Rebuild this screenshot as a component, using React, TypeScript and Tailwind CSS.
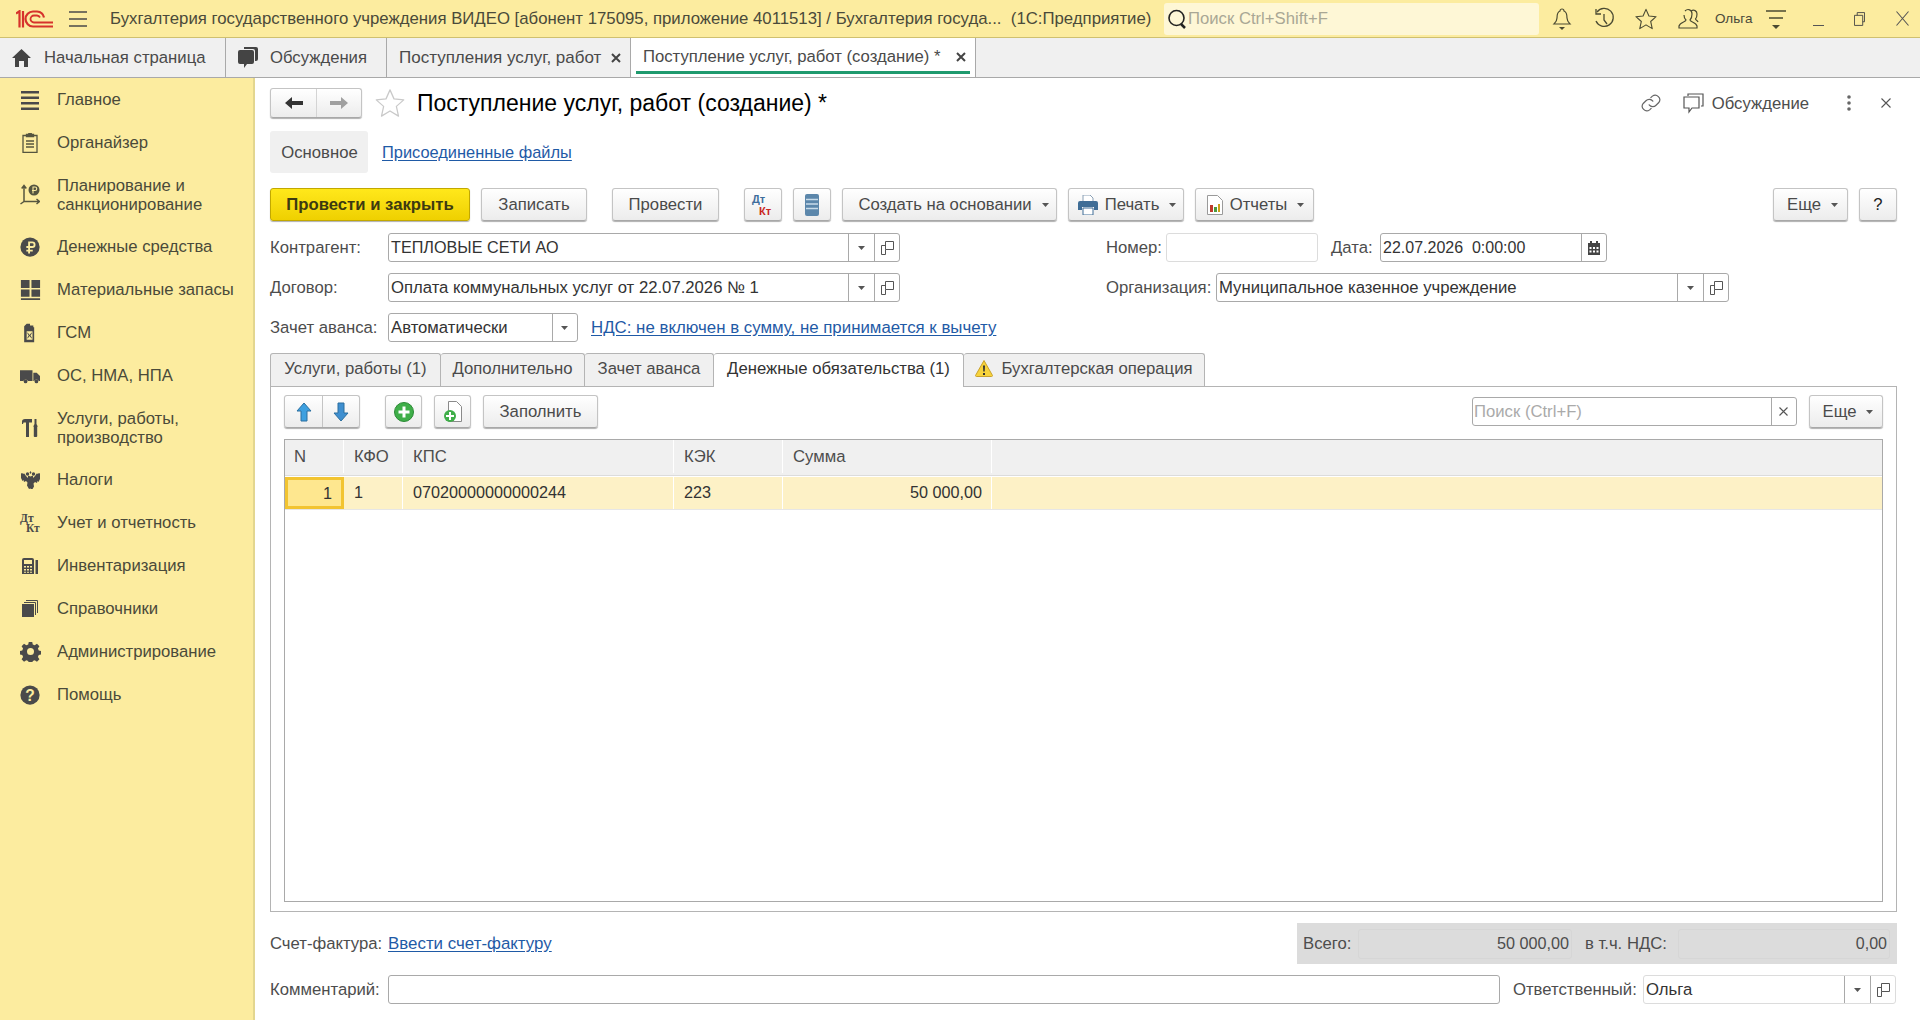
import React from "react";

const Caret = ({ c = "#555" }: { c?: string }) => (
  <svg width="7" height="4" viewBox="0 0 7 4" className="shrink-0 ml-[3px]"><path d="M0 0h7L3.5 4z" fill={c} /></svg>
);
const OpenIcon = () => (
  <svg width="14" height="14" viewBox="0 0 14 14" fill="none" stroke="#555"><path d="M5.5 .5h8v8h-8zM5.5 4.5h-4v9h4v-5" /></svg>
);
const Star = ({ s = 18, c = "#333", w = 1.2 }: { s?: number; c?: string; w?: number }) => (
  <svg width={s} height={s} viewBox="0 0 24 24" fill="none" stroke={c} strokeWidth={w} strokeLinejoin="round"><path d="M12 1.5l3.2 7.2 7.8.8-5.9 5.2 1.7 7.8L12 18.4l-6.8 4.1 1.7-7.8L1 9.5l7.8-.8z" /></svg>
);
const Close = () => (
  <svg width="10" height="10" viewBox="0 0 10 10" stroke="#444" strokeWidth="2" className="shrink-0"><path d="M1 1l8 8M9 1l-8 8" /></svg>
);

const Btn = ({ w, children, className = "" }: { w: string; children?: React.ReactNode; className?: string }) => (
  <div className={`${w} h-[33px] shrink-0 flex items-center justify-center gap-[7px] rounded-[3px] border border-[#c4c4c4] border-b-[#a8a8a8] bg-gradient-to-b from-white to-[#ececec] shadow-[0_1px_1px_#b0b0b0] text-[#4a4a4a] whitespace-nowrap ${className}`}>{children}</div>
);

const Input = ({ w, text, parts = [], className = "", textClass = "" }: { w: string; text?: string; parts?: ("down" | "open" | "cal" | "x")[]; className?: string; textClass?: string }) => (
  <div className={`${w} h-[29px] shrink-0 flex rounded-[3px] border border-[#a9a9a9] bg-white ${className}`}>
    <div className={`flex-1 min-w-0 px-[2px] leading-[27px] text-[#333] whitespace-pre overflow-hidden ${textClass}`}>{text}</div>
    {parts.map((p, i) => (
      <div key={i} className="w-[25.5px] flex items-center justify-center border-l border-[#a9a9a9]">
        {p === "down" && <svg width="7" height="4" viewBox="0 0 7 4"><path d="M0 0h7L3.5 4z" fill="#555" /></svg>}
        {p === "open" && <OpenIcon />}
        {p === "cal" && (
          <svg width="12" height="14" viewBox="0 0 12 14"><path d="M0 2h2V0h2v2h4V0h2v2h2v12H0z" fill="#444" /><path d="M1.5 6h2v2h-2zM5 6h2v2H5zM8.500 6h2v2h-2zM1.500 9.500h2v2h-2zM5 9.500h2v2H5zM8.500 9.500h2v2h-2z" fill="#fff" /></svg>
        )}
      </div>
    ))}
  </div>
);

const Label = ({ w, children }: { w: string; children: React.ReactNode }) => (
  <div className={`${w} shrink-0 text-[#4d4d4d] whitespace-nowrap`}>{children}</div>
);

const G = ({ children, s = 22 }: { children: React.ReactNode; s?: number }) => (
  <svg width={s} height={s} viewBox="0 0 24 24" fill="#4a4a4a">{children}</svg>
);

const navItems: { t: string[]; i: React.ReactNode }[] = [
  { t: ["Главное"], i: <G s={24}><path d="M3 3h18v2.500H3zM3 8.500h18V11H3zM3 14h18v2.500H3zM3 19.500h18V22H3z" /></G> },
  { t: ["Органайзер"], i: <svg width="16" height="20" viewBox="0 0 16 20" fill="none" stroke="#55553f" strokeWidth="1.300"><path d="M5 2.500H1v16.800h14V2.500h-4" /><path d="M4.500 3.500V1.500h2a1.500 1.500 0 013 0h2v2z" fill="#55553f" /><path d="M4 8h8M4 11h8M4 14h8" /></svg> },
  { t: ["Планирование и", "санкционирование"], i: <svg width="20" height="21" viewBox="0 0 20 21" fill="none" stroke="#55553f" strokeWidth="1.500"><path d="M4 2v15.500h15M1.700 4.500L4 1.500l2.300 3M16.500 15l3 2.500-3 2.500M4 17.500L.5 20" /><circle cx="14" cy="6" r="5.500" fill="#55553f" stroke="none" /><path d="M13 9.500V3h2a1.700 1.700 0 010 3.500h-3" stroke="#fcec9f" strokeWidth="1.100" /></svg> },
  { t: ["Денежные средства"], i: <G><circle cx="12" cy="12" r="10.500" /><path d="M10 6h4.500a3.500 3.500 0 010 7H12v2h3v2h-3v2h-2v-2H8v-2h2v-2H8v-2h2zm2 2v3h2.500a1.500 1.500 0 000-3z" fill="#fcec9f" /></G> },
  { t: ["Материальные запасы"], i: <G s={23}><path d="M2 2h9v8.500H2zM13 2h9v8.500h-9zM2 12h9v7.500H2zM13 12h9v7.500h-9zM2 21h20v2H2z" /></G> },
  { t: ["ГСМ"], i: <G s={20}><path fillRule="evenodd" d="M5 4l3-3h4v2h4v2h1v18H5zm3 6v10h7V10z" /><path d="M9 11l2.500 3.500L14 11v2l-1.500 2 1.500 2v2l-2.500-3.500L9 19v-2l1.500-2L9 13z" /></G> },
  { t: ["ОС, НМА, НПА"], i: <G s={20}><path d="M0 5h15v13H9.500a3 3 0 00-5.500 0H0zM16 8h4l4 4v6h-1.500a3 3 0 00-5.500 0h-1z" /><circle cx="6.700" cy="18.500" r="2.200" /><circle cx="19.700" cy="18.500" r="2.200" /></G> },
  { t: ["Услуги, работы,", "производство"], i: <svg width="17" height="18" viewBox="0 0 17 18" fill="#4a4a4a"><path d="M0 2.500C0 1 1 0 3 0h7v3.500H7V18H4V3.500H1.500L1 5H0zM12.500 0h2v5l1 2v1l-.3 0v8.500a1.200 1.200 0 01-1.200 1.500h-1a1.200 1.200 0 01-1.200-1.500V8h-.3V7l1-2z" /></svg> },
  { t: ["Налоги"], i: <svg width="19" height="18" viewBox="0 0 19 18" fill="#4a4a4a"><circle cx="6.500" cy="3" r="1.700" /><circle cx="12.500" cy="3" r="1.700" /><path d="M9.500 0l1 1.500-1 1.500-1-1.500zM0 2l1.200.8L1.500 2l1 1L3 2.200l1 1.300L5 5l2 2V4.500l2.500 1 2.500-1V7l2-2 1-1.500 1-1.300.5.8 1-1 .3.800L19 2v6l-1.500 3-1-1-.5 2-2-1-1.500 1.500.5 3-2 3.500-1.500-1.500L8 18l-2-3.500.5-3L5 10l-2 1-.5-2-1 1L0 7z" /></svg> },
  { t: ["Учет и отчетность"], i: <svg width="24" height="24" viewBox="0 0 24 24" fill="#4a4a4a"><text x="2" y="10.500" fontSize="11.500" fontWeight="700" fontFamily="Liberation Serif">Дт</text><text x="8" y="21" fontSize="11.500" fontWeight="700" fontFamily="Liberation Serif">Кт</text></svg> },
  { t: ["Инвентаризация"], i: <svg width="16" height="17" viewBox="0 0 16 17" fill="#4a4a4a"><path fillRule="evenodd" d="M0 3a2 2 0 012-2h8a2 2 0 012 2v14H0zm2 0v4h8V3zm0 6v1.500h2V9zm3 0v1.500h2V9zm3 0v1.500h2V9zm-6 3v1.500h2V12zm3 0v1.500h2V12zm3 0v1.500h2V12zm-6 2.800v1h2v-1zm3 0v1h2v-1zm3 0v1h2v-1z" /><path d="M13.500 3H16v14h-2.500z" /></svg> },
  { t: ["Справочники"], i: <svg width="16" height="17" viewBox="0 0 16 17" fill="#4a4a4a"><path d="M0 4h12v13H0z" /><path d="M2 2.500h11.500V15" fill="none" stroke="#4a4a4a" /><path d="M4 .5h11.500V13" fill="none" stroke="#4a4a4a" /></svg> },
  { t: ["Администрирование"], i: <G s={21}><path fillRule="evenodd" d="M10 1h4l.6 3 2.200.9 2.600-1.700 2.800 2.800-1.700 2.600.9 2.200 3 .6v4l-3 .6-.9 2.200 1.700 2.600-2.800 2.800-2.600-1.700-2.200.9-.6 3h-4l-.6-3-2.200-.9-2.600 1.700-2.800-2.800 1.700-2.600-.9-2.200-3-.6v-4l3-.6.9-2.200L1.800 6l2.800-2.800 2.600 1.700L9.400 4zM12 8a4 4 0 100 8 4 4 0 000-8z" /></G> },
  { t: ["Помощь"], i: <G><circle cx="12" cy="12" r="10.500" /><text x="12" y="18" fontSize="17" fontWeight="700" fill="#fcec9f" textAnchor="middle" fontFamily="Liberation Sans">?</text></G> },
];

const Logo = () => (
  <svg width="37" height="18" viewBox="0 0 37 18" fill="none" stroke="#d6322c" strokeWidth="2.200" className="shrink-0">
    <path d="M0 3.500L3.500 1.200V17.500" />
    <path d="M7 1v16.500" />
    <path d="M37 16.500H17a7.500 7.500 0 010-15h4a7.500 7.500 0 017 6" />
    <path d="M37 12.500H18a3.500 3.500 0 010-7h3a3.500 3.500 0 013 2" strokeWidth="1.800" />
  </svg>
);

const tbI = "#4a4a32";

export default function App() {
  return (
    <div className="w-[1920px] h-[1020px] overflow-hidden flex flex-col bg-white font-['Liberation_Sans',Arial,sans-serif] text-[16.700px] leading-[19px] text-[#333]">
      {/* Title bar */}
      <header className="h-[38px] shrink-0 flex items-center bg-[#fcec9f] border-b border-[#cfc070]">
        <div className="w-[69px] pl-[16px] shrink-0 flex"><Logo /></div>
        <svg className="shrink-0" width="18" height="16" viewBox="0 0 18 16" stroke="#4a4a4a" strokeWidth="1.300"><path d="M0 1h18M0 8h18M0 15h18" /></svg>
        <div className="w-[1054px] ml-[23px] shrink-0 text-[16.780px] text-[#4a4a3a] whitespace-nowrap overflow-hidden">Бухгалтерия государственного учреждения ВИДЕО [абонент 175095, приложение 4011513] / Бухгалтерия госуда...&nbsp; (1С:Предприятие)</div>
        <div className="w-[375px] h-[32px] shrink-0 flex items-center rounded-[3px] bg-[#fef7d6] pl-[3px]">
          <svg className="shrink-0" width="20" height="22" viewBox="0 0 20 22" fill="none" stroke="#222" strokeWidth="1.600"><circle cx="9.500" cy="10" r="7.500" /><path d="M14 16l4 4" strokeWidth="2.500" /></svg>
          <span className="ml-[1px] text-[#a9a795]">Поиск Ctrl+Shift+F</span>
        </div>
        <div className="w-[33px] shrink-0 flex justify-end">
          <svg width="20" height="24" viewBox="0 0 20 24" fill="none" stroke={tbI} strokeWidth="1.200"><path d="M10 2a2 2 0 012 2c3 1 3 4 3 7 0 3 2 5 3 6H2c1-1 3-3 3-6 0-3 0-6 3-7a2 2 0 012-2z" /><path d="M7 20h6l-3 3z" fill={tbI} stroke="none" /></svg>
        </div>
        <div className="w-[43px] shrink-0 flex justify-end">
          <svg width="22" height="24" viewBox="0 0 22 24" fill="none" stroke={tbI} strokeWidth="1.300"><path d="M4 5a9 9 0 11-1 9" /><path d="M3 2v5h5" /><path d="M11 7v6l3 4" /></svg>
        </div>
        <div className="w-[42px] shrink-0 flex justify-end"><Star s={22} c={tbI} /></div>
        <div className="w-[42px] shrink-0 flex justify-end">
          <svg width="22" height="24" viewBox="0 0 22 24" fill="none" stroke={tbI} strokeWidth="1.200"><path d="M8 4c3-3 7-1 7 3 0 3-1 5-2 6 0 2 6 2 7 6v2H2v-2c1-4 7-4 7-6-1-1-2-3-2-5" /><path d="M14 4c3-2 6 0 6 3 0 2-.5 4-1.500 5 0 1 2 1.500 2.500 3" /></svg>
        </div>
        <div className="ml-[16px] w-[51px] shrink-0 text-[13.500px] text-[#4a4a3a]">Ольга</div>
        <div className="w-[20px] shrink-0 flex">
          <svg width="20" height="22" viewBox="0 0 20 22" stroke={tbI} strokeWidth="1.300"><path d="M0 3h20M3 10h14" /><path d="M6 17h8l-4 4z" fill={tbI} stroke="none" /></svg>
        </div>
        <div className="w-[38px] shrink-0 flex justify-end pt-[14px]"><div className="w-[11px] h-[1px] bg-[#555]" /></div>
        <div className="w-[41px] shrink-0 flex justify-end">
          <svg width="11" height="14" viewBox="0 0 12 15" fill="none" stroke="#444"><path d="M3.500 3.500V.5h8v10h-2M.5 3.500h9v11h-9z" /></svg>
        </div>
        <div className="w-[44px] shrink-0 flex justify-end">
          <svg width="13" height="15" viewBox="0 0 13 15" stroke="#555" strokeWidth="1.100"><path d="M.5.500l12 14M12.500.500l-12 14" /></svg>
        </div>
      </header>

      {/* Tab bar */}
      <nav className="h-[40px] shrink-0 flex bg-[#f0f0f0] border-b border-[#a9a9a9]">
        <div className="w-[226px] shrink-0 flex items-center pl-[12px] border-r border-[#a9a9a9]">
          <svg width="19" height="18" viewBox="0 0 19 18" fill="#444"><path d="M9.500 0L19 9h-3v9h-4v-6H7v6H3V9H0z" /></svg>
          <span className="ml-[13px] text-[#4a4a4a]">Начальная страница</span>
        </div>
        <div className="w-[161px] shrink-0 flex items-center pl-[12px] border-r border-[#a9a9a9]">
          <svg width="20" height="22" viewBox="0 0 20 22" fill="#444"><path d="M0 5a2 2 0 012-2h12a2 2 0 012 2v10a2 2 0 01-2 2H9l-3 4v-4H2a2 2 0 01-2-2z" /><path d="M6 0h12a2 2 0 012 2v10a2 2 0 01-2 2h-1V4a2 2 0 00-2-2H6z" /></svg>
          <span className="ml-[12px] text-[#4a4a4a]">Обсуждения</span>
        </div>
        <div className="w-[244px] shrink-0 flex items-center justify-between pl-[12px] pr-[9px] border-r border-[#a9a9a9]">
          <span className="text-[17px] text-[#4a4a4a] whitespace-nowrap">Поступления услуг, работ</span>
          <Close />
        </div>
        <div className="w-[345px] shrink-0 px-[5px] bg-white border-r border-[#a9a9a9]">
          <div className="h-[36px] pt-[4px] flex items-center justify-between pl-[7px] pr-[4px] border-b-[3px] border-[#1f9a6e]">
            <span className="text-[#4a4a4a] whitespace-nowrap">Поступление услуг, работ (создание) *</span>
            <Close />
          </div>
        </div>
      </nav>

      <div className="flex-1 min-h-0 flex">
        {/* Sidebar */}
        <aside className="w-[255px] shrink-0 bg-[#fcec9f] border-r-2 border-[#e3d68f]">
          {navItems.map((n) => (
            <div key={n.t[0]} className={`${n.t.length > 1 ? "h-[61px]" : "h-[43px]"} flex items-center pl-[18px]`}>
              <div className="w-[24px] h-[24px] shrink-0 flex items-center justify-center">{n.i}</div>
              <div className="ml-[15px] text-[#4a4a3a] leading-[19px] whitespace-nowrap">{n.t.map((l) => <div key={l}>{l}</div>)}</div>
            </div>
          ))}
        </aside>

        {/* Main */}
        <main className="flex-1 min-w-0 pl-[15px] pr-[23px] pt-[10px] flex flex-col">
          <div className="h-[30px] flex items-center">
            <div className="w-[92px] h-[30px] flex rounded-[3px] border border-[#c4c4c4] border-b-[#a8a8a8] bg-gradient-to-b from-white to-[#ececec] shadow-[0_1px_1px_#b0b0b0]">
              <div className="w-[46px] flex items-center justify-center border-r border-[#d4d4d4]">
                <svg width="18" height="14" viewBox="0 0 18 14" fill="#333"><path d="M0 7l7-6v4h11v4H7v4z" /></svg>
              </div>
              <div className="flex-1 flex items-center justify-center">
                <svg width="18" height="14" viewBox="0 0 18 14" fill="#a0a0a0"><path d="M18 7l-7-6v4H0v4h11v4z" /></svg>
              </div>
            </div>
            <div className="ml-[13px]"><Star s={30} c="#c9c9c9" w={1} /></div>
            <h1 className="ml-[12px] text-[23px] leading-[30px] text-black whitespace-nowrap font-normal">Поступление услуг, работ (создание) *</h1>
            <div className="ml-auto flex items-center">
              <svg width="22" height="22" viewBox="0 0 24 24" fill="none" stroke="#666" strokeWidth="1.300" strokeLinecap="round"><path d="M10 14a5 5 0 007.500.5l3-3a5 5 0 00-7-7l-1.700 1.700" /><path d="M14 10a5 5 0 00-7.500-.5l-3 3a5 5 0 007 7l1.700-1.700" /></svg>
              <svg className="ml-[21px]" width="21" height="21" viewBox="0 0 21 21" fill="none" stroke="#555" strokeWidth="1.200"><path d="M5 3V1h15v12h-2" /><path d="M1 4h15v11H9l-3 4v-4H1z" /></svg>
              <span className="ml-[8px] text-[#4d4d4d]">Обсуждение</span>
              <svg className="ml-[38px]" width="4" height="16" viewBox="0 0 4 16" fill="#666"><circle cx="2" cy="2" r="1.800" /><circle cx="2" cy="8" r="1.800" /><circle cx="2" cy="14" r="1.800" /></svg>
              <svg className="ml-[30px] mr-[6px]" width="10" height="10" viewBox="0 0 10 10" stroke="#555" strokeWidth="1.100"><path d="M.5.5l9 9M9.500.5l-9 9" /></svg>
            </div>
          </div>

          <div className="mt-[13px] flex items-center h-[42px]">
            <div className="w-[98px] h-[42px] pl-[1px] flex items-center justify-center bg-[#f0f0f0] rounded-[3px] text-[#4a4a4a]">Основное</div>
            <a className="ml-[14px] text-[16.400px] text-[#1f5aa6] underline underline-offset-2">Присоединенные файлы</a>
          </div>

          <div className="mt-[15px] flex items-center">
            <div className="w-[200px] h-[33px] flex items-center justify-center rounded-[3px] border border-[#c2a800] bg-gradient-to-b from-[#ffe81a] to-[#efd000] shadow-[0_1px_1px_#b0b0b0] font-bold text-[#3d3a10] whitespace-nowrap">Провести и закрыть</div>
            <Btn w="w-[106px]" className="ml-[11px]">Записать</Btn>
            <Btn w="w-[107px]" className="ml-[25px]">Провести</Btn>
            <Btn w="w-[38px]" className="ml-[25px]">
              <svg width="24" height="24" viewBox="0 0 24 24"><text x="1" y="10" fontSize="11" fontWeight="700" fill="#3f6d9c" fontFamily="Liberation Sans">Дт</text><text x="8" y="21.500" fontSize="11" fontWeight="700" fill="#c9261c" fontFamily="Liberation Sans">Кт</text></svg>
            </Btn>
            <Btn w="w-[38px]" className="ml-[11px]">
              <svg width="14" height="22" viewBox="0 0 14 22"><rect x="0" y="0" width="14" height="22" rx="2" fill="#5c87ab" /><path d="M1 5.500h12M1 10h12M1 14.500h12" stroke="#c8dcea" strokeWidth="1.500" /></svg>
            </Btn>
            <Btn w="w-[215px]" className="ml-[11px] pl-[8px]">Создать на основании<Caret /></Btn>
            <Btn w="w-[116px]" className="ml-[11px] pl-[2px]">
              <svg width="20" height="20" viewBox="0 0 20 20"><path d="M5 0h7l3 3v5H5z" fill="#fff" stroke="#8aa0b5" /><path d="M0 8a2 2 0 012-2h16a2 2 0 012 2v7h-4v-3H4v3H0z" fill="#3f6d96" /><path d="M5 13h10v7H5z" fill="#fff" stroke="#3f6d96" /></svg>
              Печать<Caret />
            </Btn>
            <Btn w="w-[119px]" className="ml-[11px] pl-[2px]">
              <svg width="16" height="20" viewBox="0 0 16 20"><path d="M.5.500h10l5 5v14H.5z" fill="#fff" stroke="#9a9a9a" /><path d="M3 10h3v7H3z" fill="#c0392b" /><path d="M7 12h3v5H7z" fill="#4c9a3f" /><path d="M11 9h2v8h-2z" fill="#caa017" /></svg>
              Отчеты<Caret />
            </Btn>
            <Btn w="w-[75px]" className="ml-auto pl-[4px]">Еще<Caret /></Btn>
            <Btn w="w-[38px]" className="ml-[11px] text-[#222]">?</Btn>
          </div>

          <div className="mt-[12px] flex items-center">
            <Label w="w-[118px]">Контрагент:</Label>
            <Input w="w-[512px]" text="ТЕПЛОВЫЕ СЕТИ АО" parts={["down", "open"]} textClass="text-[16.200px]" />
            <div className="w-[206px] shrink-0" />
            <Label w="w-[60px]">Номер:</Label>
            <Input w="w-[152px]" className="border-[#dcdcdc]" />
            <Label w="w-[49px] ml-[13px]">Дата:</Label>
            <Input w="w-[227px]" text="22.07.2026  0:00:00" parts={["cal"]} textClass="text-[16px]" />
          </div>
          <div className="mt-[11px] flex items-center">
            <Label w="w-[118px]">Договор:</Label>
            <Input w="w-[512px]" text="Оплата коммунальных услуг от 22.07.2026 № 1" parts={["down", "open"]} />
            <div className="w-[206px] shrink-0" />
            <Label w="w-[110px]">Организация:</Label>
            <Input w="w-[513px]" text="Муниципальное казенное учреждение" parts={["down", "open"]} />
          </div>
          <div className="mt-[11px] flex items-center">
            <Label w="w-[118px]">Зачет аванса:</Label>
            <Input w="w-[190px]" text="Автоматически" parts={["down"]} />
            <a className="ml-[13px] text-[16.850px] text-[#1f5aa6] underline underline-offset-2 whitespace-nowrap">НДС: не включен в сумму, не принимается к вычету</a>
          </div>

          {/* Tabs */}
          <div className="mt-[11px] h-[34px] flex items-end relative z-10 -mb-[1px] text-[#4a4a4a] whitespace-nowrap">
            <div className="w-[171px] h-[33px] mb-[1px] pb-[3px] flex items-center justify-center bg-[#f0f0f0] border border-[#b4b4b4] rounded-t-[3px] border-b-0">Услуги, работы (1)</div>
            <div className="w-[144px] h-[33px] mb-[1px] pb-[3px] flex items-center justify-center bg-[#f0f0f0] border border-l-0 border-[#b4b4b4] rounded-t-[3px] border-b-0">Дополнительно</div>
            <div className="w-[129px] h-[33px] mb-[1px] pb-[3px] flex items-center justify-center bg-[#f0f0f0] border border-l-0 border-[#b4b4b4] rounded-t-[3px] border-b-0">Зачет аванса</div>
            <div className="w-[250px] h-[34px] pb-[4px] flex items-center justify-center bg-white border border-l-0 border-[#b4b4b4] rounded-t-[3px] border-b-0 text-[#333]">Денежные обязательства (1)</div>
            <div className="w-[241px] h-[33px] mb-[1px] pb-[3px] flex items-center justify-center gap-[8px] bg-[#f0f0f0] border border-l-0 border-[#b4b4b4] rounded-t-[3px] border-b-0">
              <svg width="18" height="17" viewBox="0 0 18 17"><path d="M9 .5L17.500 15.500a1 1 0 01-1 1H1.500a1 1 0 01-1-1z" fill="#f7d33c" stroke="#c9a12a" /><path d="M8 5.500h2l-.3 6H8.300zM8 13h2v2H8z" fill="#333" /></svg>
              Бухгалтерская операция
            </div>
          </div>

          <section className="h-[526px] shrink-0 border border-[#b4b4b4] px-[13px] pt-[8px] flex flex-col">
            <div className="flex items-center h-[33px]">
              <div className="w-[76px] h-[33px] flex rounded-[3px] border border-[#c4c4c4] border-b-[#a8a8a8] bg-gradient-to-b from-white to-[#ececec] shadow-[0_1px_1px_#b0b0b0]">
                <div className="w-[38px] flex items-center justify-center border-r border-[#c4c4c4]">
                  <svg width="16" height="20" viewBox="0 0 16 20"><path d="M8 1l7 8h-4v10H5V9H1z" fill="#3da0e0" stroke="#2b6f9f" /></svg>
                </div>
                <div className="flex-1 flex items-center justify-center">
                  <svg width="16" height="20" viewBox="0 0 16 20"><path d="M8 19l7-8h-4V1H5v10H1z" fill="#3f8fd0" stroke="#2b6f9f" /></svg>
                </div>
              </div>
              <Btn w="w-[37px]" className="ml-[25px]">
                <svg width="20" height="20" viewBox="0 0 20 20"><circle cx="10" cy="10" r="9.500" fill="#3fae49" stroke="#2b8a35" /><path d="M8.500 4.500h3v4h4v3h-4v4h-3v-4h-4v-3h4z" fill="#fff" /></svg>
              </Btn>
              <Btn w="w-[37px]" className="ml-[12px]">
                <svg width="20" height="22" viewBox="0 0 20 22"><path d="M5.500.5h8l5 5v15h-13z" fill="#fff" stroke="#8a8a8a" /><circle cx="7" cy="15" r="6" fill="#3fae49" /><path d="M6 11h2v3h3v2H8v3H6v-3H3v-2h3z" fill="#fff" /></svg>
              </Btn>
              <Btn w="w-[115px]" className="ml-[12px]">Заполнить</Btn>
              <div className="ml-auto w-[325px] h-[29px] shrink-0 flex rounded-[3px] border border-[#a9a9a9] bg-white">
                <div className="flex-1 min-w-0 px-[1px] leading-[27px] text-[#aaa] whitespace-nowrap">Поиск (Ctrl+F)</div>
                <div className="w-[25.500px] flex items-center justify-center border-l border-[#a9a9a9]">
                  <svg width="9" height="9" viewBox="0 0 9 9" stroke="#555" strokeWidth="1.100"><path d="M.5.5l8 8M8.500.5l-8 8" /></svg>
                </div>
              </div>
              <Btn w="w-[74px]" className="ml-[12px] pl-[4px]">Еще<Caret /></Btn>
            </div>

            <div className="mt-[11px] h-[463px] border border-[#a9a9a9] flex flex-col">
              <div className="h-[36px] pb-[2px] shrink-0 flex bg-[#f0f0f0] border-b border-[#dcdcdc] text-[#4d4d4d]">
                <div className="w-[59px] pl-[9px] flex items-center border-r border-white">N</div>
                <div className="w-[59px] pl-[10px] flex items-center border-r border-white">КФО</div>
                <div className="w-[271px] pl-[10px] flex items-center border-r border-white">КПС</div>
                <div className="w-[109px] pl-[10px] flex items-center border-r border-white">КЭК</div>
                <div className="w-[209px] pl-[10px] flex items-center border-r border-white">Сумма</div>
              </div>
              <div className="h-[33px] shrink-0 mt-[1px] flex bg-[#fdf1c6] border-b border-[#e6e6e6] text-[#333] text-[16.200px]">
                <div className="w-[59px] flex items-center justify-end pr-[9px] bg-[#fee78f] border-[3px] border-[#f2c431]">1</div>
                <div className="w-[59px] pl-[10px] pb-[2px] flex items-center border-r border-white">1</div>
                <div className="w-[271px] pl-[10px] pb-[2px] flex items-center border-r border-white">07020000000000244</div>
                <div className="w-[109px] pl-[10px] pb-[2px] flex items-center border-r border-white">223</div>
                <div className="w-[209px] pr-[9px] pb-[2px] flex items-center justify-end border-r border-white">50 000,00</div>
              </div>
            </div>
          </section>

          <div className="mt-[11px] h-[41px] flex items-center">
            <Label w="w-[118px]">Счет-фактура:</Label>
            <a className="text-[16.900px] text-[#1f5aa6] underline underline-offset-2 whitespace-nowrap">Ввести счет-фактуру</a>
            <div className="ml-auto w-[600px] h-[41px] flex items-center bg-[#dcdcdc] pl-[6px] pr-[7px] text-[#4d4d4d] whitespace-nowrap">
              <div className="w-[55px]">Всего:</div>
              <div className="w-[214px] h-[30px] pr-[2px] flex items-center justify-end border border-[#d6d6d6] rounded-[3px] text-[16.200px]">50 000,00</div>
              <div className="w-[93px] ml-[13px]">в т.ч. НДС:</div>
              <div className="flex-1 h-[30px] pr-[2px] flex items-center justify-end border border-[#d6d6d6] rounded-[3px] text-[16px]">0,00</div>
            </div>
          </div>

          <div className="mt-[11px] flex items-center">
            <Label w="w-[118px]">Комментарий:</Label>
            <Input w="w-[1112px]" />
            <Label w="w-[130px] ml-[13px]">Ответственный:</Label>
            <Input w="w-[253px]" text="Ольга" parts={["down", "open"]} className="border-[#dcdcdc]" />
          </div>
        </main>
      </div>
    </div>
  );
}
